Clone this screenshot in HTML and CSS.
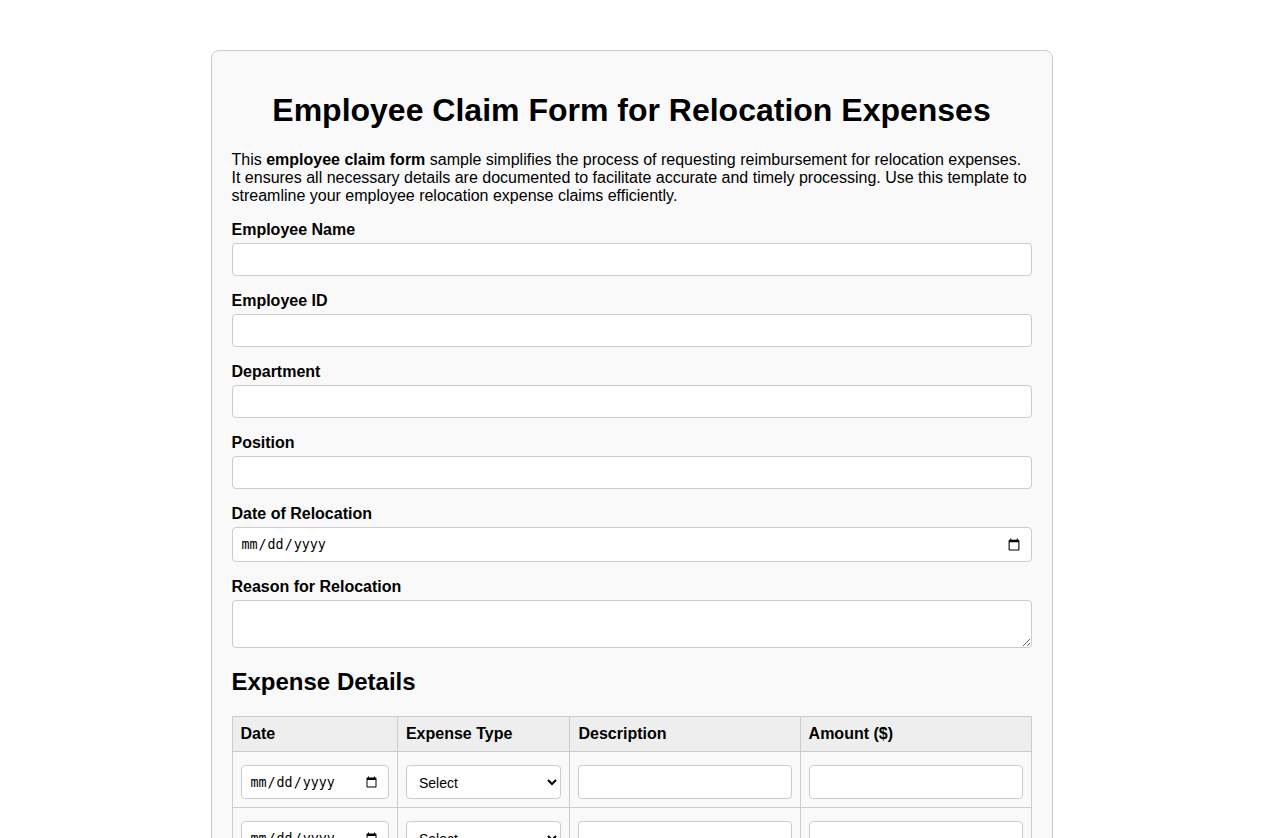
FILE: index.html
```html
<!DOCTYPE html>
<html lang="en">
<head>
<meta charset="UTF-8">
<title>Employee Claim Form for Relocation Expenses</title>
<link rel="stylesheet" href="styles.css">
</head>
<body>
<div class="container">
  <h1>Employee Claim Form for Relocation Expenses</h1>
  <p>This <strong>employee claim form</strong> sample simplifies the process of requesting reimbursement for relocation expenses. It ensures all necessary details are documented to facilitate accurate and timely processing. Use this template to streamline your employee relocation expense claims efficiently.</p>
  <form>
    <div class="form-group">
      <label for="name">Employee Name</label>
      <input type="text" id="name">
    </div>
    <div class="form-group">
      <label for="empid">Employee ID</label>
      <input type="text" id="empid">
    </div>
    <div class="form-group">
      <label for="dept">Department</label>
      <input type="text" id="dept">
    </div>
    <div class="form-group">
      <label for="pos">Position</label>
      <input type="text" id="pos">
    </div>
    <div class="form-group">
      <label for="reldate">Date of Relocation</label>
      <input type="date" id="reldate">
    </div>
    <div class="form-group">
      <label for="reason">Reason for Relocation</label>
      <textarea id="reason" rows="2"></textarea>
    </div>

    <h2>Expense Details</h2>
    <table class="expenses">
      <colgroup>
        <col class="c-date"><col class="c-type"><col class="c-desc"><col class="c-amt">
      </colgroup>
      <thead>
        <tr><th>Date</th><th>Expense Type</th><th>Description</th><th>Amount ($)</th></tr>
      </thead>
      <tbody>
        <tr>
          <td><input type="date"></td>
          <td><select><option>Select</option><option>Transportation</option><option>Lodging</option><option>Meals</option><option>Moving Services</option><option>Other</option></select></td>
          <td><input type="text"></td>
          <td><input type="number"></td>
        </tr>
        <tr>
          <td><input type="date"></td>
          <td><select><option>Select</option><option>Transportation</option><option>Lodging</option><option>Meals</option><option>Moving Services</option><option>Other</option></select></td>
          <td><input type="text"></td>
          <td><input type="number"></td>
        </tr>
        <tr>
          <td><input type="date"></td>
          <td><select><option>Select</option><option>Transportation</option><option>Lodging</option><option>Meals</option><option>Moving Services</option><option>Other</option></select></td>
          <td><input type="text"></td>
          <td><input type="number"></td>
        </tr>
      </tbody>
    </table>

    <div class="form-group">
      <label for="total">Total Amount Claimed ($)</label>
      <input type="number" id="total">
    </div>
    <div class="form-group">
      <label for="sig">Employee Signature</label>
      <input type="text" id="sig">
    </div>
    <div class="form-group">
      <label for="sigdate">Date</label>
      <input type="date" id="sigdate">
    </div>
    <button type="submit" class="submit">Submit Claim</button>
  </form>
</div>
</body>
</html>
```

FILE: styles.css
```css
body {
  margin: 0;
  font-family: "Liberation Sans", Arial, sans-serif;
  background: #ffffff;
  color: #000000;
}

.container {
  max-width: 800px;
  margin: 50px auto;
  padding: 20px;
  background: #f9f9f9;
  border: 1px solid #cccccc;
  border-radius: 8px;
}

h1 {
  text-align: center;
  font-size: 32px;
  margin: 0.67em 0;
}

p {
  margin: 16px 0 15px;
}

h2 {
  font-size: 24px;
  margin: 20px 0;
}

.form-group {
  margin-bottom: 15px;
}

label {
  display: block;
  font-weight: bold;
  padding-top: 1px;
}

input,
select,
textarea {
  display: block;
  width: 100%;
  padding: 8px;
  margin-top: 4px;
  box-sizing: border-box;
  border: 1px solid #cccccc;
  border-radius: 4px;
  background: #ffffff;
}

select {
  font-family: "Liberation Sans", Arial, sans-serif;
  font-size: 14px;
  color: #000000;
}

.expenses {
  width: 100%;
  border-collapse: collapse;
  table-layout: fixed;
  margin-bottom: 20px;
}

.c-date { width: 20.7%; }
.c-type { width: 21.6%; }
.c-desc { width: 28.8%; }
.c-amt { width: 28.9%; }

.expenses th,
.expenses td {
  border: 1px solid #cccccc;
  padding: 8px;
  text-align: left;
}

.expenses th {
  background: #eeeeee;
}

.expenses td input,
.expenses td select {
  height: 34px;
  margin-top: 5px;
}

.submit {
  padding: 10px 20px;
  background: #4caf50;
  color: #ffffff;
  border: none;
  border-radius: 4px;
  font-size: 16px;
  cursor: pointer;
}
```
